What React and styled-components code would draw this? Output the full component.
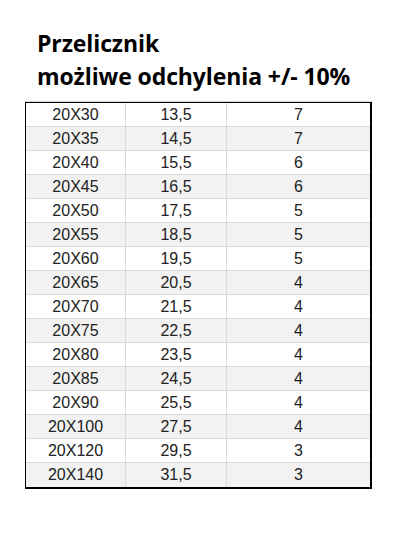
import React from 'react';
import styled, { createGlobalStyle } from 'styled-components';

const GlobalStyle = createGlobalStyle`
  body {
    margin: 0;
    background: #fff;
  }
`;

const Page = styled.div`
  padding: 27px 0 40px 25px;
  width: 408px;
  box-sizing: border-box;
`;

const Title = styled.h1`
  margin: 0 0 9px 12px;
  font-family: 'Open Sans', 'Liberation Sans', sans-serif;
  font-weight: 700;
  font-size: 23px;
  line-height: 33px;
  color: #000;
  letter-spacing: -0.1px;
`;

const Table = styled.div`
  width: 347px;
  box-sizing: border-box;
  border: 1px solid #000;
  border-right-width: 2px;
  border-bottom-width: 2px;
  box-shadow: 0 -1px 0 #d4d4d4;
`;

const Row = styled.div`
  display: grid;
  grid-template-columns: 100px 101px 1fr;
  height: 24px;
  box-sizing: border-box;
  background: ${(p) => (p.$shaded ? '#f2f2f2' : '#fff')};
  border-bottom: ${(p) => (p.$last ? 'none' : '1px solid #dadada')};
`;

const Cell = styled.div`
  display: flex;
  align-items: center;
  justify-content: center;
  font-family: 'Liberation Sans', Arial, sans-serif;
  font-size: 16px;
  color: #222;
  border-right: ${(p) => (p.$end ? 'none' : '1px solid #dadada')};
`;

const rows = [
  ['20X30', '13,5', '7'],
  ['20X35', '14,5', '7'],
  ['20X40', '15,5', '6'],
  ['20X45', '16,5', '6'],
  ['20X50', '17,5', '5'],
  ['20X55', '18,5', '5'],
  ['20X60', '19,5', '5'],
  ['20X65', '20,5', '4'],
  ['20X70', '21,5', '4'],
  ['20X75', '22,5', '4'],
  ['20X80', '23,5', '4'],
  ['20X85', '24,5', '4'],
  ['20X90', '25,5', '4'],
  ['20X100', '27,5', '4'],
  ['20X120', '29,5', '3'],
  ['20X140', '31,5', '3'],
];

function App() {
  return (
    <Page>
      <GlobalStyle />
      <Title>
        Przelicznik
        <br />
        możliwe odchylenia +/- 10%
      </Title>
      <Table>
        {rows.map((r, i) => (
          <Row key={r[0]} $shaded={i % 2 === 1} $last={i === rows.length - 1}>
            <Cell>{r[0]}</Cell>
            <Cell>{r[1]}</Cell>
            <Cell $end>{r[2]}</Cell>
          </Row>
        ))}
      </Table>
    </Page>
  );
}

export default App;
